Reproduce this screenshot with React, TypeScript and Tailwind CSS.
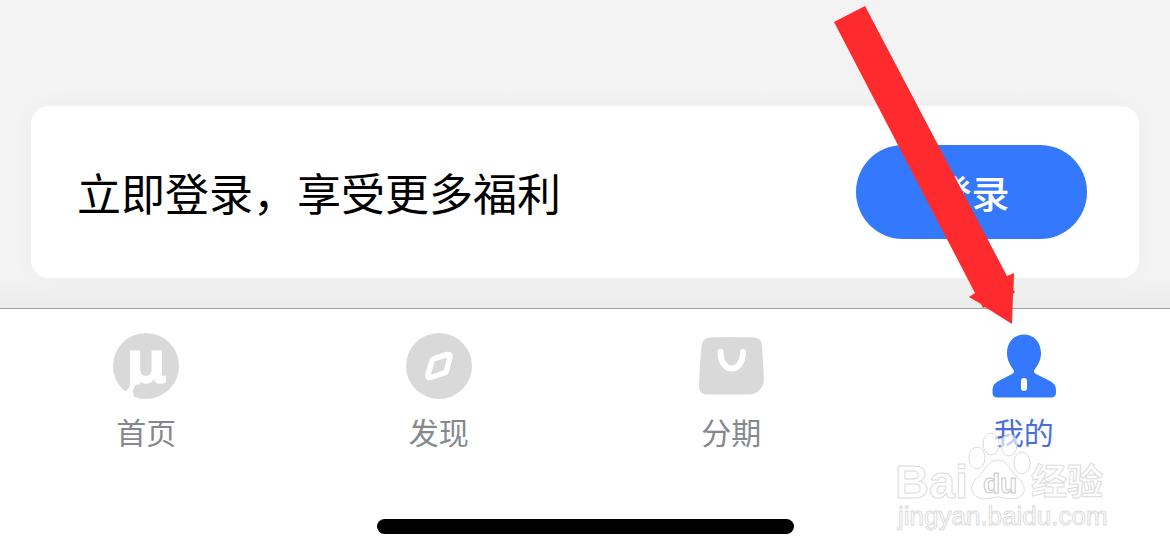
import React from "react";

function HomeIcon() {
  return (
    <svg viewBox="0 0 66 66" className="size-[66px] overflow-visible" aria-hidden="true">
      <circle cx="33" cy="33" r="33" fill="#d9d9d9" />
      <text x="12" y="50" fontFamily="DejaVu Sans" fontWeight="700" fontSize="58" fill="#fff">
        µ
      </text>
      <path d="M20.500 63.500Q18.500 54 24 51.500H30V65.800Z" fill="#d9d9d9" />
      <path d="M17 45V52Q16 57 10 60L17 65.500L21.500 66Q19 58 20 54Z" fill="#fff" />
    </svg>
  );
}

function DiscoverIcon() {
  return (
    <svg viewBox="0 0 66 66" className="size-[66px]" aria-hidden="true">
      <circle cx="33" cy="33" r="33" fill="#d9d9d9" />
      <path
        d="M28.500 25.500L41.500 21.500Q44.500 21 44 24L40.500 37.500Q40 39.500 38 40L24.500 44.500Q21.300 45 21.800 42L26 28Q26.600 26.100 28.500 25.500Z"
        fill="none"
        stroke="#fff"
        strokeWidth="5.500"
        strokeLinejoin="round"
      />
    </svg>
  );
}

function InstallmentIcon() {
  return (
    <svg viewBox="0 0 66 66" className="size-[66px]" aria-hidden="true">
      <path
        d="M12 4.500Q33 3.500 56 4.500Q63 5 64 11.500Q65 29 66 47Q65 56 57 60.500Q54 61.500 49 61.500H8Q1 61 1 53Q1.500 33 3.500 12.500Q4.500 5 12 4.500Z"
        fill="#d9d9d9"
      />
      <path
        d="M22.500 19C22.500 41 45 41 45 19"
        fill="none"
        stroke="#fff"
        strokeWidth="6"
        strokeLinecap="round"
      />
    </svg>
  );
}

function ProfileIcon() {
  return (
    <svg viewBox="0 0 66 66" className="size-[66px]" aria-hidden="true">
      <path
        d="M33 1.500C43 1.500 50 9.500 50 20C50 27 47 32 43 37.500Q42.500 39.500 45 41L59 48Q65 51 65 57V59.500Q65 64.500 60 64.500H6.500Q1.500 64.500 1.500 59.500V57Q1.500 51 7.500 48L21 41Q23.500 39.500 23 37.500C19 32 16 27 16 20C16 9.500 23 1.500 33 1.500Z"
        fill="#3478fd"
      />
      <rect x="30" y="45" width="6" height="13" rx="3" fill="#fff" />
    </svg>
  );
}

const tabs = [
  { label: "首页", icon: HomeIcon, active: false },
  { label: "发现", icon: DiscoverIcon, active: false },
  { label: "分期", icon: InstallmentIcon, active: false },
  { label: "我的", icon: ProfileIcon, active: true },
];

function Arrow() {
  return (
    <svg
      viewBox="830 0 190 330"
      className="pointer-events-none absolute top-0 right-[150px] h-[330px] w-[190px]"
      aria-hidden="true"
    >
      <path
        d="M834 22L865 6L1007 276L1014 273L1013.500 290L1015 292L1013 294L1012 324L985 307L983 308L981 304L969 297L975 293Z"
        fill="#fd2b2d"
      />
    </svg>
  );
}

function Watermark() {
  return (
    <svg
      viewBox="890 425 225 110"
      className="pointer-events-none absolute top-[425px] right-[55px] h-[110px] w-[225px]"
      fill="#fff"
      fillOpacity="0.65"
      stroke="#dcdcdc"
      strokeWidth="1"
      fontFamily="'Liberation Sans', 'Noto Sans CJK SC', sans-serif"
    >
      <text x="895" y="498" fontSize="47" fontWeight="700">
        Bai
      </text>
      <ellipse cx="977" cy="458" rx="8" ry="11" />
      <ellipse cx="991" cy="444" rx="8" ry="11" />
      <ellipse cx="1009" cy="445" rx="8" ry="11" />
      <ellipse cx="1022" cy="463" rx="8" ry="11" />
      <path d="M998 460C1008 460 1010 471 1018 478C1027 486 1026 496 1016 498C1008 500 1003 497 998 497C992 497 987 500 980 498C970 495 969 485 978 477C985 471 988 460 998 460Z" />
      <text x="983" y="493" fontSize="28" fontWeight="700" stroke="#c8c8c8">
        du
      </text>
      <text x="1031" y="495" fontSize="36" fontWeight="700" fontFamily="'Noto Sans CJK SC', sans-serif">
        经验
      </text>
      <text x="898" y="525" fontSize="26">
        jingyan.baidu.com
      </text>
    </svg>
  );
}

export default function App() {
  return (
    <div className="relative flex min-h-screen flex-col bg-white font-['Noto_Sans_CJK_SC',sans-serif]">
      <main className="bg-[#f3f3f3] bg-linear-to-b from-[#f3f3f3] from-90% to-[#ebebeb] px-[31px] pt-[106px] pb-[30px]">
        <section className="flex items-center justify-between rounded-[18px] bg-white py-[39px] pr-[52px] pl-[46px] shadow-[0_0_24px_rgba(0,0,0,0.03)]">
          <p className="text-[44px] leading-[60px] text-black">立即登录，享受更多福利</p>
          <button
            type="button"
            className="h-[94px] w-[231px] rounded-full bg-[#3478fd] text-[38px] leading-[56px] font-medium text-white"
          >
            登录
          </button>
        </section>
      </main>
      <nav className="grid grid-cols-4 border-t border-[#a0a0a0] pt-6">
        {tabs.map(({ label, icon: Icon, active }) => (
          <a key={label} href="#" className="flex flex-col items-center gap-2.5">
            <Icon />
            <span
              className={
                active
                  ? "text-[30px] leading-[44px] text-[#4a70d8]"
                  : "text-[30px] leading-[44px] text-[#85888c]"
              }
            >
              {label}
            </span>
          </a>
        ))}
      </nav>
      <div className="mx-auto mt-auto mb-6 h-[15px] w-[417px] rounded-full bg-black" />
      <Arrow />
      <Watermark />
    </div>
  );
}
